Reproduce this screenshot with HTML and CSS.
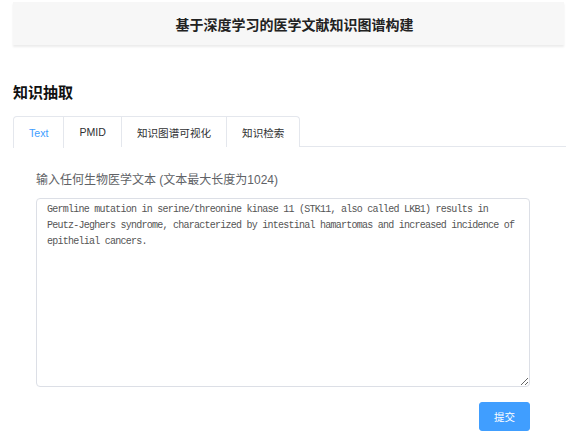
FILE: index.html
```html
<!DOCTYPE html>
<html lang="zh">
<head>
<meta charset="utf-8">
<link rel="stylesheet" href="styles.css">
</head>
<body>
<div class="page">
  <header class="topbar">基于深度学习的医学文献知识图谱构建</header>
  <h2 class="section-title">知识抽取</h2>
  <div class="tabs">
    <div class="tab active">Text</div>
    <div class="tab">PMID</div>
    <div class="tab">知识图谱可视化</div>
    <div class="tab">知识检索</div>
  </div>
  <div class="panel">
    <div class="label">输入任何生物医学文本 (文本最大长度为1024)</div>
    <textarea class="input">Germline mutation in serine/threonine kinase 11 (STK11, also called LKB1) results in Peutz-Jeghers syndrome, characterized by intestinal hamartomas and increased incidence of epithelial cancers.</textarea>
    <div class="actions"><button class="submit">提交</button></div>
  </div>
</div>
</body>
</html>
```

FILE: styles.css
```css
* { box-sizing: border-box; }
html, body { margin: 0; padding: 0; background: #fff; }
body {
  font-family: "Liberation Sans", "Noto Sans CJK SC", sans-serif;
  color: #303133;
  overflow: hidden;
}
.page {
  padding: 2px 0 0 13px;
}
.topbar {
  height: 43px;
  width: 551px;
  background: #f7f7f7;
  box-shadow: 0 2px 2px #ececec;
  display: flex;
  align-items: center;
  justify-content: center;
  font-family: "Noto Sans CJK SC", sans-serif;
  font-size: 14px;
  font-weight: 700;
  color: #222;
  padding-left: 12px;
}
.section-title {
  margin: 36px 0 0 0;
  font-family: "Noto Sans CJK SC", sans-serif;
  font-size: 15px;
  line-height: 22px;
  font-weight: 700;
  color: #111;
}
.tabs {
  margin-top: 13px;
  display: flex;
  border-bottom: 1px solid #e4e7ed;
  height: 31px;
}
.tabs .tab {
  height: 31px;
  padding: 0 15px;
  display: flex;
  align-items: center;
  font-size: 10.6px;
  color: #303133;
  border: 1px solid #e4e7ed;
  border-left: none;
  border-bottom: none;
  background: #fff;
}
.tabs .tab:first-child {
  border-left: 1px solid #e4e7ed;
  border-top-left-radius: 4px;
}
.tabs .tab:last-child { border-top-right-radius: 4px; }
.tabs .tab.active {
  color: #409eff;
  height: 32px;
}
.panel {
  padding: 23px 0 0 23px;
  width: 517px;
}
.label {
  font-family: "Liberation Sans", "Noto Sans CJK SC", sans-serif;
  font-size: 12px;
  color: #606266;
  line-height: 18px;
  padding-top: 1px;
}
.input {
  display: block;
  margin-top: 9px;
  width: 494px;
  height: 189px;
  border: 1px solid #dcdfe6;
  border-radius: 4px;
  padding: 3px 10px 4px 10px;
  font-family: "Liberation Mono", monospace;
  font-size: 10px;
  letter-spacing: -0.75px;
  line-height: 16px;
  color: #555;
  resize: vertical;
  outline: none;
}
.actions {
  display: flex;
  justify-content: flex-end;
  margin-top: 15px;
}
.submit {
  width: 51px;
  height: 29px;
  background: #409eff;
  border: 1px solid #409eff;
  border-radius: 3px;
  color: #fff;
  font-family: "Noto Sans CJK SC", sans-serif;
  font-size: 10.5px;
  padding: 0;
}
```
